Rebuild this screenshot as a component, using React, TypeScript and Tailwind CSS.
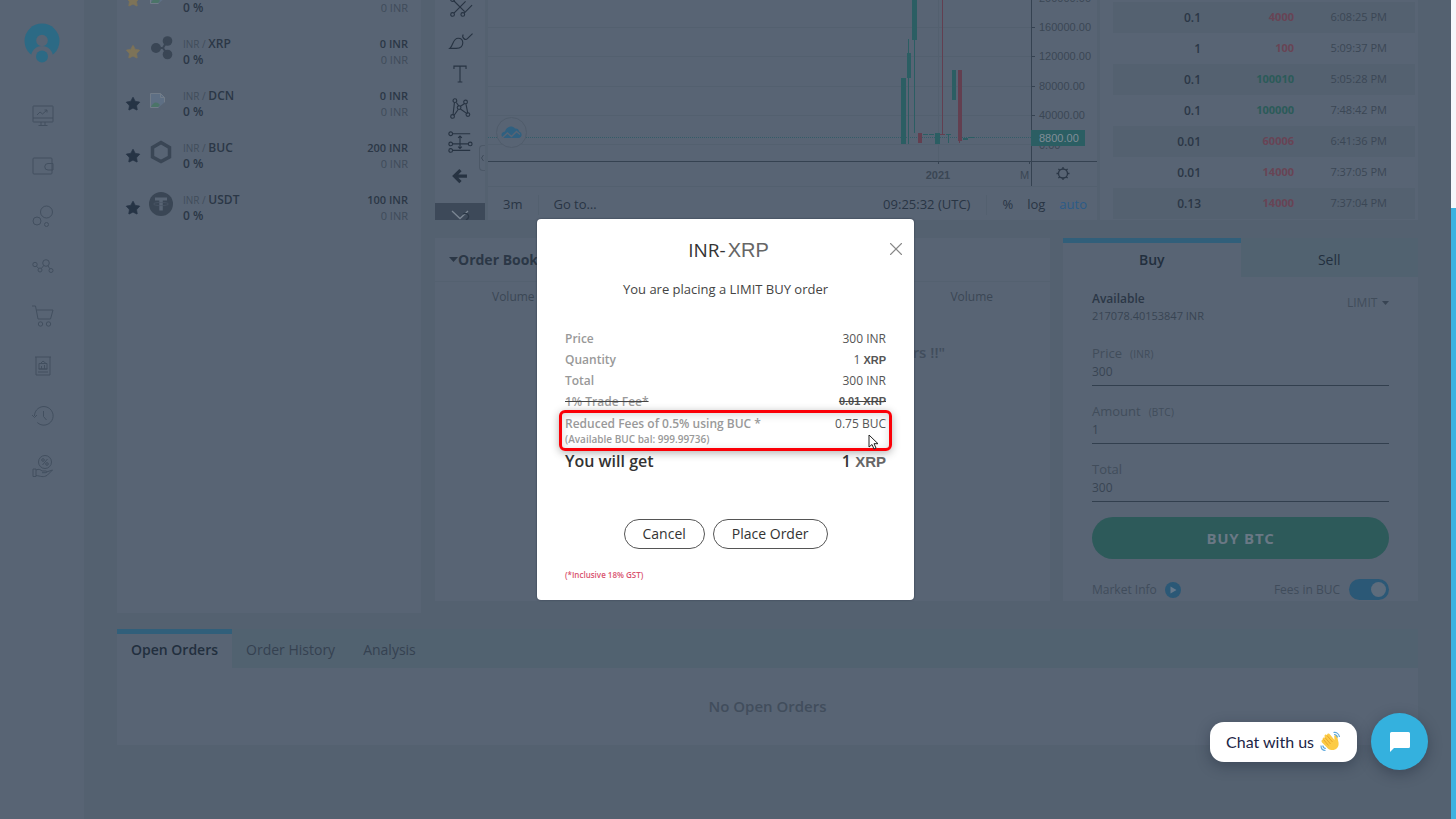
import { ReactNode, useState } from 'react';
import { Star, X } from 'lucide-react';

interface Market {
  name: string;
  icon: 'broken' | 'ripple' | 'hexagon' | 'tether';
  starred: boolean;
  price: string;
}

const markets: Market[] = [
  { name: 'ETH', icon: 'broken', starred: true, price: '0 INR' },
  { name: 'XRP', icon: 'ripple', starred: true, price: '0 INR' },
  { name: 'DCN', icon: 'broken', starred: false, price: '0 INR' },
  { name: 'BUC', icon: 'hexagon', starred: false, price: '200 INR' },
  { name: 'USDT', icon: 'tether', starred: false, price: '100 INR' },
];

const trades = [
  { amount: '0.1', price: '4000', side: 'sell', time: '6:08:25 PM' },
  { amount: '1', price: '100', side: 'sell', time: '5:09:37 PM' },
  { amount: '0.1', price: '100010', side: 'buy', time: '5:05:28 PM' },
  { amount: '0.1', price: '100000', side: 'buy', time: '7:48:42 PM' },
  { amount: '0.01', price: '60006', side: 'sell', time: '6:41:36 PM' },
  { amount: '0.01', price: '14000', side: 'sell', time: '7:37:05 PM' },
  { amount: '0.13', price: '14000', side: 'sell', time: '7:37:04 PM' },
];

const navItems: { label: string; icon: ReactNode }[] = [
  {
    label: 'Exchange',
    icon: (
      <>
        <rect x="2" y="2" width="20" height="16" rx="0.5" />
        <path d="M2 14h20M10 18v3.5M14 18v3.5M7.500 21.500h9M6 11l3-3 2.500 2L16 6M13.500 6H16v2.500" />
      </>
    ),
  },
  {
    label: 'Wallet',
    icon: (
      <>
        <rect x="2" y="4" width="19" height="16" rx="1" />
        <path d="M22 9.500h-5a2.700 2.700 0 0 0 0 6.500h5z" />
      </>
    ),
  },
  {
    label: 'Coins',
    icon: (
      <>
        <circle cx="15.500" cy="8" r="6" />
        <circle cx="6" cy="17" r="4" />
        <circle cx="15.500" cy="20.500" r="2" />
      </>
    ),
  },
  {
    label: 'Network',
    icon: (
      <>
        <circle cx="4" cy="10.500" r="2.200" />
        <circle cx="9" cy="16" r="2" />
        <circle cx="15" cy="9" r="3.300" />
        <circle cx="20" cy="16.500" r="2" />
        <path d="M5.500 12.200 7.700 14.500M10.300 14.500l2.500-3M17 11.800l1.800 3" />
      </>
    ),
  },
  {
    label: 'Shop',
    icon: (
      <>
        <path d="M1 2h3.500L7 15h12.500L22 6H5.500" />
        <circle cx="9.500" cy="20" r="2.200" />
        <circle cx="17.500" cy="20" r="2.200" />
      </>
    ),
  },
  {
    label: 'Reports',
    icon: (
      <>
        <path d="M4 3h16M5 3v18h14V3M7 18h10" />
        <path d="M8 15V9.500h8V15zM10.500 12v3M13.500 11v4M7.500 15h9M9.500 9.500 12 7l3 2.500" />
      </>
    ),
  },
  {
    label: 'History',
    icon: (
      <>
        <path d="M3.500 12a9.300 9.300 0 1 1 2.800 6.500" />
        <path d="m1 11 2.500 2.500L6 11M12.500 7v5.500l3 3.500" />
      </>
    ),
  },
  {
    label: 'Rewards',
    icon: (
      <>
        <circle cx="14" cy="8" r="6.500" />
        <path d="m16.500 5-5 6" />
        <circle cx="12" cy="6" r="1.300" />
        <circle cx="16" cy="10" r="1.300" />
        <path d="M2 15h3v7.500H2zM5 16c3-1.500 5 0 6 1h4c1 0 1 1.700 0 1.700h-4M15.500 18l6-2-5 5c-4 3-7 1-11.500.5" />
      </>
    ),
  },
];

const tools: { label: string; icon: ReactNode }[] = [
  {
    label: 'Pitchfork',
    icon: (
      <>
        <path d="m7 7 12 12M7.500 20.500 20 8M18.500 20.500 27 12M7 17" />
        <circle cx="6" cy="6" r="2" />
        <circle cx="6" cy="22" r="2" />
        <circle cx="17" cy="22" r="2" />
      </>
    ),
  },
  {
    label: 'Brush',
    icon: <path d="M3 22c4-3 3-11 9-11 3 0 5 2 5 5 0 4-3 6-7 6zM17.500 7c-2 3 2 7 4.500 4.500L27.500 6" />,
  },
  { label: 'Text', icon: <path d="M7.500 7.500V4.500h13v3M14 4.500v17M11.500 21.500h5" /> },
  {
    label: 'Patterns',
    icon: (
      <>
        <path d="M6.500 20.500 8 7M10 7l3 4M14.500 11 19 8M20.500 9l2 10M7.500 21 12 14.500M14.500 14l7 5" />
        <circle cx="8.500" cy="5" r="2" />
        <circle cx="20" cy="6.500" r="2" />
        <circle cx="13" cy="12.500" r="2" />
        <circle cx="22.500" cy="20" r="2" />
        <circle cx="6" cy="22" r="2" />
      </>
    ),
  },
  {
    label: 'Position',
    icon: (
      <>
        <path d="M6 4h19M6 15h17M6 22h19M14 7v12M12 8.500l2-2 2 2M12 18l2 2 2-2" />
        <circle cx="4" cy="4" r="2" />
        <circle cx="4" cy="15" r="2" />
        <circle cx="25" cy="15" r="2" />
        <circle cx="4" cy="22" r="2" />
      </>
    ),
  },
  { label: 'Back', icon: <path d="M14.500 6.500 8 13l6.500 6.500M8.500 13H21.500" strokeWidth="3.500" /> },
];

const gridLines = [27, 56, 86, 115, 144];
const axisLabels = [
  { y: -2, text: '200000.00' },
  { y: 27, text: '160000.00' },
  { y: 56, text: '120000.00' },
  { y: 86, text: '80000.00' },
  { y: 115, text: '40000.00' },
];

// x, top, width, height
const greenBars = [
  [901, 78, 5, 66],
  [907, 53, 4, 25],
  [908, 39, 1, 105],
  [912, 0, 5, 40],
  [914, 40, 1, 93],
  [923, 134, 5, 1],
  [929, 134, 5, 1],
  [935, 133, 5, 11],
  [946, 134, 5, 1],
  [948, 134, 1, 9],
  [952, 70, 4, 30],
  [963, 138, 5, 2],
  [968, 137, 6, 1],
];
const redBars = [
  [918, 133, 4, 10],
  [942, 0, 1, 134],
  [940, 134, 5, 1],
  [958, 70, 4, 71],
  [959, 141, 1, 2],
];

function MarketIcon({ icon }: { icon: Market['icon'] }) {
  if (icon === 'broken') {
    return (
      <svg width="18" height="24" viewBox="0 -4 18 24" className="block">
        <path d="M1.500 1.500h10l4 4v10h-14z" fill="#5e6f84" stroke="#717c89" />
        <path d="M2 15c2-5 6-6 9-2l-2 2z" fill="#4b7468" />
        <path d="m9 16 7-6v6z" fill="#586474" />
        <path d="M11.500 1.500v4h4" fill="none" stroke="#717c89" />
      </svg>
    );
  }
  return (
    <svg width="24" height="24" viewBox="0 0 24 24" className="block">
      {icon === 'ripple' && (
        <g fill="#3a4655">
          <circle cx="7" cy="12" r="5" />
          <circle cx="18.500" cy="5" r="4.800" />
          <circle cx="18.500" cy="18.500" r="4.800" />
          <path d="M6 12h8l4-7M14 12l4 6" fill="none" stroke="#3a4655" strokeWidth="2" />
        </g>
      )}
      {icon === 'hexagon' && (
        <path d="m12 2.500 8.500 5v9.500L12 21.500 3.500 17V7.500z" fill="none" stroke="#3a4655" strokeWidth="3.500" />
      )}
      {icon === 'tether' && (
        <>
          <circle cx="12" cy="12" r="12" fill="#3a4655" />
          <path d="M6 5.500h12v3h-4.200v10h-3.500v-10H6z" fill="#586474" />
          <ellipse cx="12" cy="12" rx="7.500" ry="1.600" fill="none" stroke="#4a5666" strokeWidth="0.800" />
        </>
      )}
    </svg>
  );
}

function Sidebar() {
  return (
    <aside className="flex w-[84px] shrink-0 flex-col items-center bg-[#586474] pt-[23px]">
      <a href="#home" aria-label="Home" className="mr-px block">
        <svg width="36" height="42" viewBox="0 0 36 42">
          <circle cx="18" cy="18" r="17.500" fill="#2c6a85" />
          <path d="M7 42V34a11 11 0 0 1 22 0v8z" fill="#586474" />
          <circle cx="18" cy="17.500" r="5.800" fill="#586474" />
          <circle cx="18" cy="33.500" r="6" fill="#2c6a85" />
        </svg>
      </a>
      <nav className="ml-0.5 mt-[26px] flex flex-col">
        {navItems.map((item) => (
          <a key={item.label} href="#nav" aria-label={item.label} className="flex h-[50px] items-center">
            <svg width="24" height="24" viewBox="0 0 24 24" fill="none" stroke="#424f5f" strokeWidth="1">
              {item.icon}
            </svg>
          </a>
        ))}
      </nav>
    </aside>
  );
}

function MarketList() {
  return (
    <section className="w-[304px] shrink-0 overflow-hidden bg-[#586474]">
      <ul className="-mt-[26px]">
        {markets.map((market) => (
          <li key={market.name} className="flex h-[52px] items-start pl-2 pr-[13px] pt-[10px]">
            <button aria-label={'Favourite ' + market.name} className="mt-2">
              <Star
                size={16}
                strokeWidth={1}
                className={market.starred ? 'fill-[#7d7358] text-[#7d7358]' : 'fill-[#263445] text-[#263445]'}
              />
            </button>
            <div className="ml-2 w-[34px]">
              <MarketIcon icon={market.icon} />
            </div>
            <div className="text-xs leading-4 font-semibold text-[#2b3746]">
              <div>
                <span className="text-[10px] font-normal text-[#414d5b]">INR / </span>
                {market.name}
              </div>
              <div>0 %</div>
            </div>
            <div className="ml-auto text-right text-[11px] leading-4 text-[#3f4b5a]">
              <div className="font-semibold text-[#2b3746]">{market.price}</div>
              <div className="font-medium">0 INR</div>
            </div>
          </li>
        ))}
      </ul>
    </section>
  );
}

function PriceChart() {
  return (
    <svg
      viewBox="488 0 609 187"
      preserveAspectRatio="xMaxYMin slice"
      className="block h-[187px] w-full font-['Liberation_Sans',sans-serif]"
    >
      <g stroke="#53606f">
        {gridLines.map((y) => (
          <path key={y} d={`M488 ${y}.5H1031`} />
        ))}
        <path d="M938.500 0V161M488 186.500H1097" />
      </g>
      <path d="M488 137.500H1031" stroke="#335d68" strokeDasharray="1 1" />
      {greenBars.map(([x, y, w, h]) => (
        <rect key={`${x}-${y}`} x={x} y={y} width={w} height={h} fill="#2b5e63" />
      ))}
      {redBars.map(([x, y, w, h]) => (
        <rect key={`${x}-${y}`} x={x} y={y} width={w} height={h} fill="#633f50" />
      ))}
      <path
        d="M488 161.500H1097M1031.500 0V186M1031 27.500h4M1031 56.500h4M1031 86.500h4M1031 115.500h4M938.500 161v3M1029.500 161v3"
        stroke="#354251"
        fill="none"
      />
      <g fill="#3b4755" fontSize="11">
        {axisLabels.map((label) => (
          <text key={label.text} x="1039" y={label.y + 4}>
            {label.text}
          </text>
        ))}
        <text x="1039" y="149">0.00</text>
        <text x="938" y="179" textAnchor="middle" fontWeight="bold">2021</text>
        <text x="1020" y="179">M</text>
      </g>
      <rect x="1031" y="130" width="54" height="16" fill="#2b5e63" />
      <text x="1039" y="142" fontSize="11" fill="#818d98">8800.00</text>
      <g fill="none" stroke="#2b3746">
        <circle cx="1063" cy="173.500" r="4.500" strokeWidth="1.300" />
        <path
          d="M1063 167v2M1063 178v2M1056.500 173.500h2M1067.500 173.500h2M1058.400 168.900l1.400 1.400M1066.200 176.700l1.400 1.400M1058.400 178.100l1.400-1.400M1066.200 170.300l1.400-1.400"
          strokeWidth="1.300"
        />
      </g>
      <circle cx="511.500" cy="132.500" r="15" fill="#586474" stroke="#505c6b" />
      <path
        d="M505 138c-5 0-4.500-6 0-6.500 1-5 7-6.500 10-3 4-.5 4 3 4 3 3.500.5 3.500 6 0 6.500z"
        fill="#2f6080"
      />
      <path d="m502 138 5.500-5 4 3.500 5-5 3.500 3" fill="none" stroke="#586474" strokeWidth="1.500" />
    </svg>
  );
}

function ChartPanel() {
  return (
    <section className="flex min-w-0 flex-1 bg-[#546170]">
      <div className="relative flex w-[50px] shrink-0 flex-col overflow-hidden bg-[#586474]">
        <div className="-mt-[10px] flex flex-col">
          {tools.map((tool) => (
            <button key={tool.label} aria-label={tool.label} className="flex h-[34px] items-center justify-center">
              <svg width="26" height="26" viewBox="0 0 28 28" fill="none" stroke="#273342" strokeWidth="1.200">
                {tool.icon}
              </svg>
            </button>
          ))}
        </div>
        <button aria-label="More tools" className="mt-[9px] flex h-[17px] justify-center bg-[#3d4959]">
          <svg width="20" height="17" viewBox="0 0 20 17" fill="none" stroke="#7b8693" strokeWidth="1.300">
            <path d="m2 8 8 7.500L18 8" />
            <path d="M13 11c5-2 8 3 3 6" stroke="#2b3746" />
          </svg>
        </button>
        <span className="absolute right-0 top-[145px] flex h-[26px] w-[6px] items-center rounded-l border border-r-0 border-[#4c5867]">
          <svg width="4" height="8" viewBox="0 0 4 8" fill="none" stroke="#3f4b5a">
            <path d="M3.500 1 1.500 4l2 3" />
          </svg>
        </span>
      </div>
      <div className="ml-[3px] min-w-0 flex-1 bg-[#586474]">
        <PriceChart />
        <div className="flex h-[33px] items-center pl-[15px] pr-[10px] pt-0.5 text-[13px] text-[#293544]">
          <button>3m</button>
          <span className="ml-4 h-5 w-px bg-[#53606f]" />
          <button className="ml-[14px]">Go to…</button>
          <button className="ml-auto">09:25:32 (UTC)</button>
          <span className="ml-4 h-5 w-px bg-[#53606f]" />
          <button className="ml-[15px]">%</button>
          <button className="ml-[14px]">log</button>
          <button className="ml-[14px] text-[#2b5b88]">auto</button>
        </div>
      </div>
    </section>
  );
}

function TradeHistory() {
  return (
    <section className="w-[318px] shrink-0 bg-[#586474] pl-[13px] pr-[3px] pt-0.5">
      <table className="w-full table-fixed text-right text-xs">
        <tbody>
          {trades.map((trade) => (
            <tr key={trade.time} className="h-[31px] odd:bg-[#546170]">
              <td className="w-[88px] font-semibold text-[#2b3746]">{trade.amount}</td>
              <td
                className={
                  'w-[93px] text-[11px] font-bold ' + (trade.side === 'buy' ? 'text-[#2b5b59]' : 'text-[#684455]')
                }
              >
                {trade.price}
              </td>
              <td className="pr-7 text-[11px] text-[#3b4755]">{trade.time}</td>
            </tr>
          ))}
        </tbody>
      </table>
    </section>
  );
}

function OrderBook() {
  return (
    <section className="min-w-0 flex-1 bg-[#586474] text-[#3b4755]">
      <header className="flex h-11 items-center border-b border-[#546170] pl-[14px]">
        <button className="flex items-center text-sm font-bold text-[#2b3746]">
          <svg width="9" height="5" viewBox="0 0 9 5" fill="#2b3746">
            <path d="M0 0h9L4.500 5z" />
          </svg>
          Order Book
        </button>
      </header>
      <div className="flex justify-between px-[57px] pt-1.5 text-xs leading-[18px]">
        <span>Volume</span>
        <span>Volume</span>
      </div>
      <p className="mt-[34px] pl-[276px] text-center text-[15px] leading-6 font-semibold text-[#414d5c]">
        "No Sell Orders !!"
      </p>
    </section>
  );
}

function Field({ id, label, unit, value }: { id: string; label: string; unit?: string; value: string }) {
  return (
    <div className="mb-[15px] flex flex-col border-b border-[#323f4e] pb-1">
      <label htmlFor={id} className="flex h-5 items-baseline gap-2 text-[13px] leading-5 text-[#414d5b]">
        {label}
        {unit && <span className="text-[10px] tracking-wide">({unit})</span>}
      </label>
      <input
        id={id}
        defaultValue={value}
        className="h-[18px] w-full bg-transparent text-[12px] text-[#384453] outline-none"
      />
    </div>
  );
}

function OrderForm() {
  const [feesInBuc, setFeesInBuc] = useState(true);

  return (
    <section className="w-[355px] shrink-0 bg-[#586474]">
      <div className="grid h-[39px] grid-cols-2 text-sm text-[#222f3e]">
        <button className="border-t-[5px] border-[#315f7a] font-semibold">Buy</button>
        <button className="bg-[#516270] pt-1 font-medium">Sell</button>
      </div>
      <div className="px-[29px] pt-[14px]">
        <div className="mb-[18px] flex items-start justify-between text-[#384453]">
          <div>
            <div className="text-xs leading-4 font-semibold text-[#2b3746]">Available</div>
            <div className="text-[11px] leading-[18px]">217078.40153847 INR</div>
          </div>
          <div className="mt-[3px] flex items-center gap-1">
            <select aria-label="Order type" className="appearance-none bg-transparent text-[12px] text-[#414d5b]">
              <option>LIMIT</option>
            </select>
            <svg width="7" height="4" viewBox="0 0 7 4" fill="#384453">
              <path d="M0 0h7L3.500 4z" />
            </svg>
          </div>
        </div>
        <Field id="price" label="Price" unit="INR" value="300" />
        <Field id="amount" label="Amount" unit="BTC" value="1" />
        <Field id="total" label="Total" value="300" />
        <button className="block h-[42px] w-full rounded-full bg-[#2d5a5a] text-[15px] font-bold tracking-wider text-[#6a7885]">
          BUY BTC
        </button>
        <div className="mt-5 flex h-[22px] items-center justify-between pb-px text-xs text-[#404c5b]">
          <a href="#market-info" className="flex items-center gap-2">
            Market Info
            <svg width="16" height="16" viewBox="0 0 16 16">
              <circle cx="8" cy="8" r="8" fill="#2b5876" />
              <path d="m5.500 4.500 6 3.500-6 3.500z" fill="#66788a" />
            </svg>
          </a>
          <label className="flex items-center gap-[9px]">
            Fees in BUC
            <input
              type="checkbox"
              checked={feesInBuc}
              onChange={() => setFeesInBuc(!feesInBuc)}
              className="peer sr-only"
            />
            <span className="flex h-[21px] w-10 justify-start rounded-full bg-[#2b5876] p-[3px] peer-checked:justify-end">
              <span className="size-[15px] rounded-full bg-[#5d6c7c]" />
            </span>
          </label>
        </div>
      </div>
    </section>
  );
}

function OrdersPanel() {
  return (
    <section className="mt-4 bg-[#586474]">
      <div className="flex h-[39px] bg-[#516270] text-sm text-[#354150]">
        <button className="border-t-[5px] border-[#315f7a] bg-[#586474] px-[14px] pb-0.5 font-semibold text-[#222f3e]">
          Open Orders
        </button>
        <button className="px-[14px] pt-0.5">Order History</button>
        <button className="px-[14px] pt-0.5">Analysis</button>
      </div>
      <p className="flex h-[77px] items-center justify-center text-[15px] font-semibold text-[#414d5c]">
        No Open Orders
      </p>
    </section>
  );
}

function SummaryRow({ label, children }: { label: string; children: ReactNode }) {
  return (
    <div className="flex h-[21px] items-center justify-between">
      <dt className="font-semibold text-[#999]">{label}</dt>
      <dd className="text-[#555]">{children}</dd>
    </div>
  );
}

function ConfirmDialog() {
  return (
    <div className="absolute inset-0 flex items-center justify-center">
      <div
        role="dialog"
        aria-labelledby="dialog-title"
        className="relative w-[377px] rounded-[4px] bg-white px-7 pb-[19px] pt-[18px] text-[#444] shadow-[0_0_2px_#2b3746]"
      >
        <button aria-label="Close" className="absolute right-[7px] top-[19px] text-[#888]">
          <X size={22} strokeWidth={1.2} />
        </button>
        <h2 id="dialog-title" className="pl-1.5 text-center text-[19px] leading-[26px] font-medium text-[#333]">
          INR-
          <span className="ml-0.5 font-['Liberation_Sans',sans-serif] text-[20px] font-normal text-[#666]">XRP</span>
        </h2>
        <p className="mt-[15px] text-center text-[13px] leading-[22px]">You are placing a LIMIT BUY order</p>
        <dl className="mt-7 text-xs">
          <SummaryRow label="Price">300 INR</SummaryRow>
          <SummaryRow label="Quantity">
            1 <span className="font-['Liberation_Sans',sans-serif] text-[11px] font-bold">XRP</span>
          </SummaryRow>
          <SummaryRow label="Total">300 INR</SummaryRow>
          <div className="flex h-[21px] items-center justify-between line-through">
            <dt className="font-semibold text-[#999]">1% Trade Fee*</dt>
            <dd className="font-['Liberation_Sans',sans-serif] text-[11px] font-bold text-[#555]">0.01 XRP</dd>
          </div>
          <div className="-mx-1.5 -mt-0.5 flex h-[41px] justify-between rounded-md border-[3px] border-[#fb0007] px-[3px] pt-0.5 shadow-[0_2px_8px_rgba(0,0,0,0.3),inset_0_2px_8px_rgba(0,0,0,0.15)]">
            <dt className="font-semibold text-[#999]">
              <div className="leading-[18px]">Reduced Fees of 0.5% using BUC *</div>
              <div className="text-[10px] leading-3">(Available BUC bal: 999.99736)</div>
            </dt>
            <dd className="leading-[18px] text-[#555]">0.75 BUC</dd>
          </div>
          <div className="flex h-5 items-center justify-between text-base font-semibold text-[#333]">
            <dt>You will get</dt>
            <dd>
              1 <span className="font-['Liberation_Sans',sans-serif] text-[15px] text-[#666]">XRP</span>
            </dd>
          </div>
        </dl>
        <div className="mt-12 flex justify-center gap-2 text-sm font-medium text-[#333]">
          <button className="h-[30px] rounded-full border border-[#555] px-[18px]">Cancel</button>
          <button className="h-[30px] rounded-full border border-[#555] px-[18px]">Place Order</button>
        </div>
        <p className="mt-5 text-[8px] leading-3 font-semibold text-[#d9536f]">(*Inclusive 18% GST)</p>
        {/* Mouse pointer over the reduced fee row */}
        <svg width="11" height="16" viewBox="0 0 11 16" className="absolute left-[331px] top-[215px]">
          <path d="M1 1v12l3-2.500 2 4.500 2-1-2-4.300h4z" fill="#fff" stroke="#222" />
        </svg>
      </div>
    </div>
  );
}

function ChatWidget() {
  return (
    <div className="absolute bottom-[49px] right-[23px] flex items-center gap-[14px]">
      <button className="flex h-10 items-center gap-1.5 rounded-[14px] bg-white px-4 font-[Lato,sans-serif] text-base text-[#1b2546] shadow-[0_4px_14px_rgba(20,30,45,0.35)]">
        Chat with us
        <svg width="21" height="21" viewBox="0 0 21 21" aria-hidden="true">
          <path
            d="M3 8.500c-1-2 1-2.700 2-1.500L4.500 5c0-1.800 1.800-2 2.500-.7C7 2.500 9 2 10 3.500l4.500 5.500-.3-3.500c0-2 3-2 3 0l1.300 6c.8 5-3 8-7 7.500-2-.2-3.500-1-5-3L2 11.500c-1.300-1.800.2-3.500 1-3z"
            fill="#fccb45"
          />
          <path d="m3.500 8.500 5 6M5 6.500l5.500 6.500M7 4.500l5.500 6.500" fill="none" stroke="#e39b26" strokeWidth="0.800" />
          <path
            d="M13.500 1.500c3-.5 5.500 1.500 6 4.500M14 3.500c2 0 3.200 1 3.500 3M1 14.500c0 3 1.500 5 4.500 5M2.800 14.500c.2 2 1 2.800 3 3"
            fill="none"
            stroke="#5aa7dd"
            strokeWidth="1.200"
          />
        </svg>
      </button>
      <button
        aria-label="Open chat"
        className="flex size-[57px] items-center justify-center rounded-full bg-[#34b1de] shadow-[0_4px_14px_rgba(20,30,45,0.35)]"
      >
        <svg width="22" height="22" viewBox="0 0 22 22" fill="#fff">
          <path d="M2.500 1h17q1.500 0 1.500 1.500v13q0 1.500-1.500 1.500H5l-4 4V2.500Q1 1 2.500 1z" />
        </svg>
      </button>
    </div>
  );
}

export default function App() {
  return (
    <div className="flex h-screen overflow-hidden bg-[#546170] font-['Open_Sans',sans-serif]">
      <div className="relative flex min-w-0 flex-1">
        <Sidebar />
        <main className="min-w-0 flex-1 px-[33px]">
          <div className="flex gap-[14px]">
            <MarketList />
            <div className="min-w-0 flex-1 pb-3">
              <div className="flex h-[220px] gap-[3px]">
                <ChartPanel />
                <TradeHistory />
              </div>
              <div className="mt-[18px] flex gap-[13px]">
                <OrderBook />
                <OrderForm />
              </div>
            </div>
          </div>
          <OrdersPanel />
        </main>
        <ConfirmDialog />
        <ChatWidget />
      </div>
      <div className="flex w-[5px] shrink-0 flex-col bg-[#3db2e0]">
        <div className="h-[208px] bg-[#f5f7fb]" />
      </div>
    </div>
  );
}
